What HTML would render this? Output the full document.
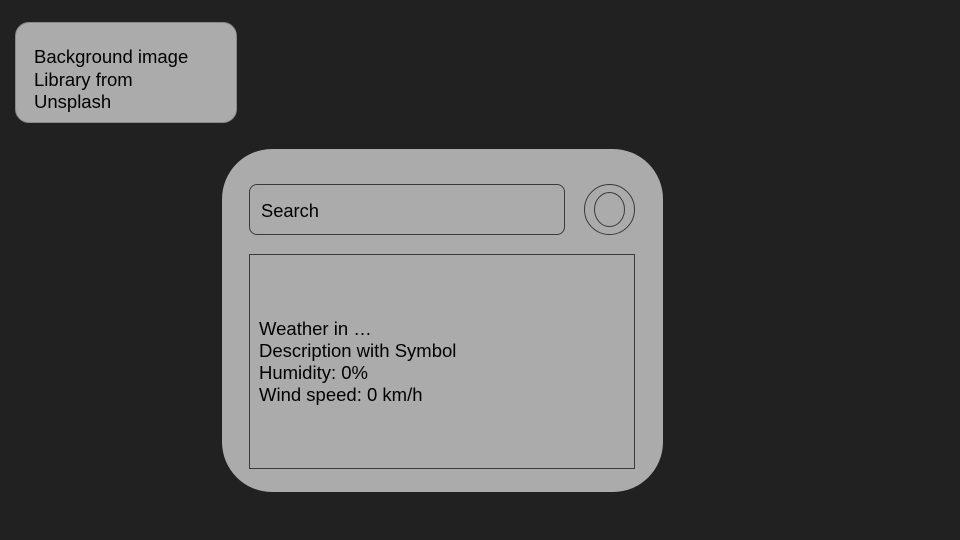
<!DOCTYPE html>
<html><head><style>
body{margin:0;width:960px;height:540px;background:#212121;position:relative;overflow:hidden;font-family:"Liberation Sans",sans-serif;color:#000}
.a{position:absolute;background:#ababab}
</style></head><body>
<div class="a" style="left:15px;top:22px;width:222px;height:101px;border-radius:14px;border:1px solid #8a8a8a;box-sizing:border-box"></div>
<div style="position:absolute;left:34px;top:46px;font-size:18.5px;line-height:22.5px">Background image<br>Library from<br>Unsplash</div>
<div class="a" style="left:222px;top:149px;width:441px;height:343px;border-radius:50px"></div>
<div style="position:absolute;left:249px;top:184px;width:316px;height:51px;border:1px solid #3a3a3a;border-radius:8px;box-sizing:border-box"></div>
<div style="position:absolute;left:261px;top:200px;font-size:18.3px;line-height:21px">Search</div>
<svg style="position:absolute;left:580px;top:180px" width="60" height="60"><circle cx="29.5" cy="29.5" r="25" fill="none" stroke="#3a3a3a" stroke-width="1"/><ellipse cx="29.5" cy="29.5" rx="15" ry="17" fill="none" stroke="#3a3a3a" stroke-width="1"/></svg>
<div style="position:absolute;left:249px;top:254px;width:386px;height:215px;border:1px solid #3a3a3a;box-sizing:border-box"></div>
<div style="position:absolute;left:259px;top:318px;font-size:18.5px;line-height:22px">Weather in …<br>Description with Symbol<br>Humidity: 0%<br>Wind speed: 0 km/h</div>
</body></html>
